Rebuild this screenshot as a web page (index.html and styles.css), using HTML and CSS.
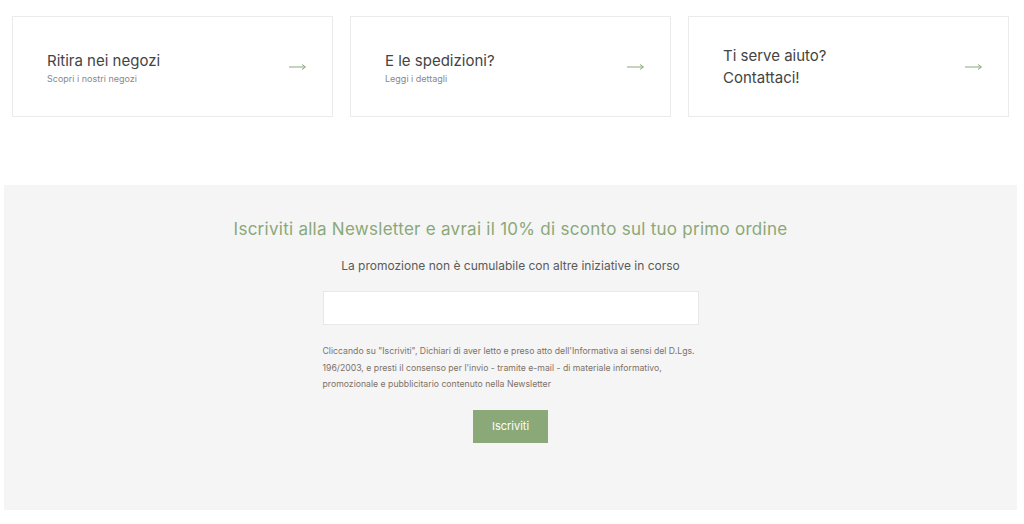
FILE: index.html
```html
<!DOCTYPE html>
<html lang="it">
<head>
  <meta charset="UTF-8" />
  <meta name="viewport" content="width=device-width, initial-scale=1.0"/>
  <title>Servizi e Newsletter</title>
  <link rel="stylesheet" href="styles.css">
</head>
<body>

  <!-- Service boxes -->
  <div class="cards">
    <a class="card" href="#">
      <div class="card-text">
        <div class="card-title">Ritira nei negozi</div>
        <div class="card-sub">Scopri i nostri negozi</div>
      </div>
      <svg class="arrow" width="18" height="8" viewBox="0 0 18 8"><path d="M0 4H16M13 1.5L16.5 4L13 6.5" fill="none" stroke="#8aa878" stroke-width="1"/></svg>
    </a>
    <a class="card" href="#">
      <div class="card-text">
        <div class="card-title">E le spedizioni?</div>
        <div class="card-sub">Leggi i dettagli</div>
      </div>
      <svg class="arrow" width="18" height="8" viewBox="0 0 18 8"><path d="M0 4H16M13 1.5L16.5 4L13 6.5" fill="none" stroke="#8aa878" stroke-width="1"/></svg>
    </a>
    <a class="card" href="#">
      <div class="card-text">
        <div class="card-title">Ti serve aiuto?<br>Contattaci!</div>
      </div>
      <svg class="arrow" width="18" height="8" viewBox="0 0 18 8"><path d="M0 4H16M13 1.5L16.5 4L13 6.5" fill="none" stroke="#8aa878" stroke-width="1"/></svg>
    </a>
  </div>

  <!-- Newsletter -->
  <div class="newsletter">
    <h2 class="nl-title">Iscriviti alla Newsletter e avrai il 10% di sconto sul tuo primo ordine</h2>
    <p class="nl-sub">La promozione non è cumulabile con altre iniziative in corso</p>
    <form class="nl-form" onsubmit="return false;">
      <input class="nl-input" type="email" aria-label="Email">
      <p class="nl-privacy">Cliccando su "Iscriviti", Dichiari di aver letto e preso atto dell'Informativa ai sensi del D.Lgs. 196/2003, e presti il consenso per l'invio - tramite e-mail - di materiale informativo, promozionale e pubblicitario contenuto nella Newsletter</p>
      <button class="nl-button" type="submit">Iscriviti</button>
    </form>
  </div>

</body>
</html>
```

FILE: styles.css
```css
/* Global */
body {
  margin: 0;
  background: #fff;
  font-family: 'Inter', 'Open Sans', sans-serif;
  color: #444;
}

/* Service boxes */
.cards {
  display: flex;
  gap: 17px;
  padding: 16px 0 0 12px;
}
.card {
  box-sizing: border-box;
  width: 321px;
  height: 101px;
  border: 1px solid #ebebeb;
  display: flex;
  align-items: center;
  justify-content: space-between;
  padding: 0 25px 0 34px;
  text-decoration: none;
}
.card-title {
  font-size: 15px;
  line-height: 22px;
  color: #444;
}
.card-sub {
  font-size: 9px;
  color: #888;
  margin-top: 1px;
}
.arrow {
  display: block;
  margin-top: 1px;
}

/* Newsletter */
.newsletter {
  margin: 68px 7px 0 4px;
  height: 325px;
  box-sizing: border-box;
  background: #f5f5f5;
  padding-top: 33px;
  text-align: center;
}
.nl-title {
  margin: 0;
  font-size: 17px;
  font-weight: 400;
  line-height: 22px;
  letter-spacing: 0.27px;
  color: #8aa878;
}
.nl-sub {
  margin: 18px 0 0;
  font-size: 12px;
  line-height: 16px;
  color: #5a5a5a;
}
.nl-form {
  width: 376px;
  margin: 17px auto 0;
  text-align: left;
}
.nl-input {
  display: block;
  box-sizing: border-box;
  width: 100%;
  height: 34px;
  border: 1px solid #e8e8e8;
  background: #fff;
  margin: 0;
}
.nl-privacy {
  margin: 18px 0 0;
  font-size: 8.7px;
  line-height: 16.5px;
  color: #7d7268;
}
.nl-button {
  display: block;
  margin: 17px auto 0;
  width: 75px;
  height: 33px;
  border: none;
  background: #8aa878;
  color: #fff;
  font-family: inherit;
  font-size: 11px;
  cursor: pointer;
}
```
